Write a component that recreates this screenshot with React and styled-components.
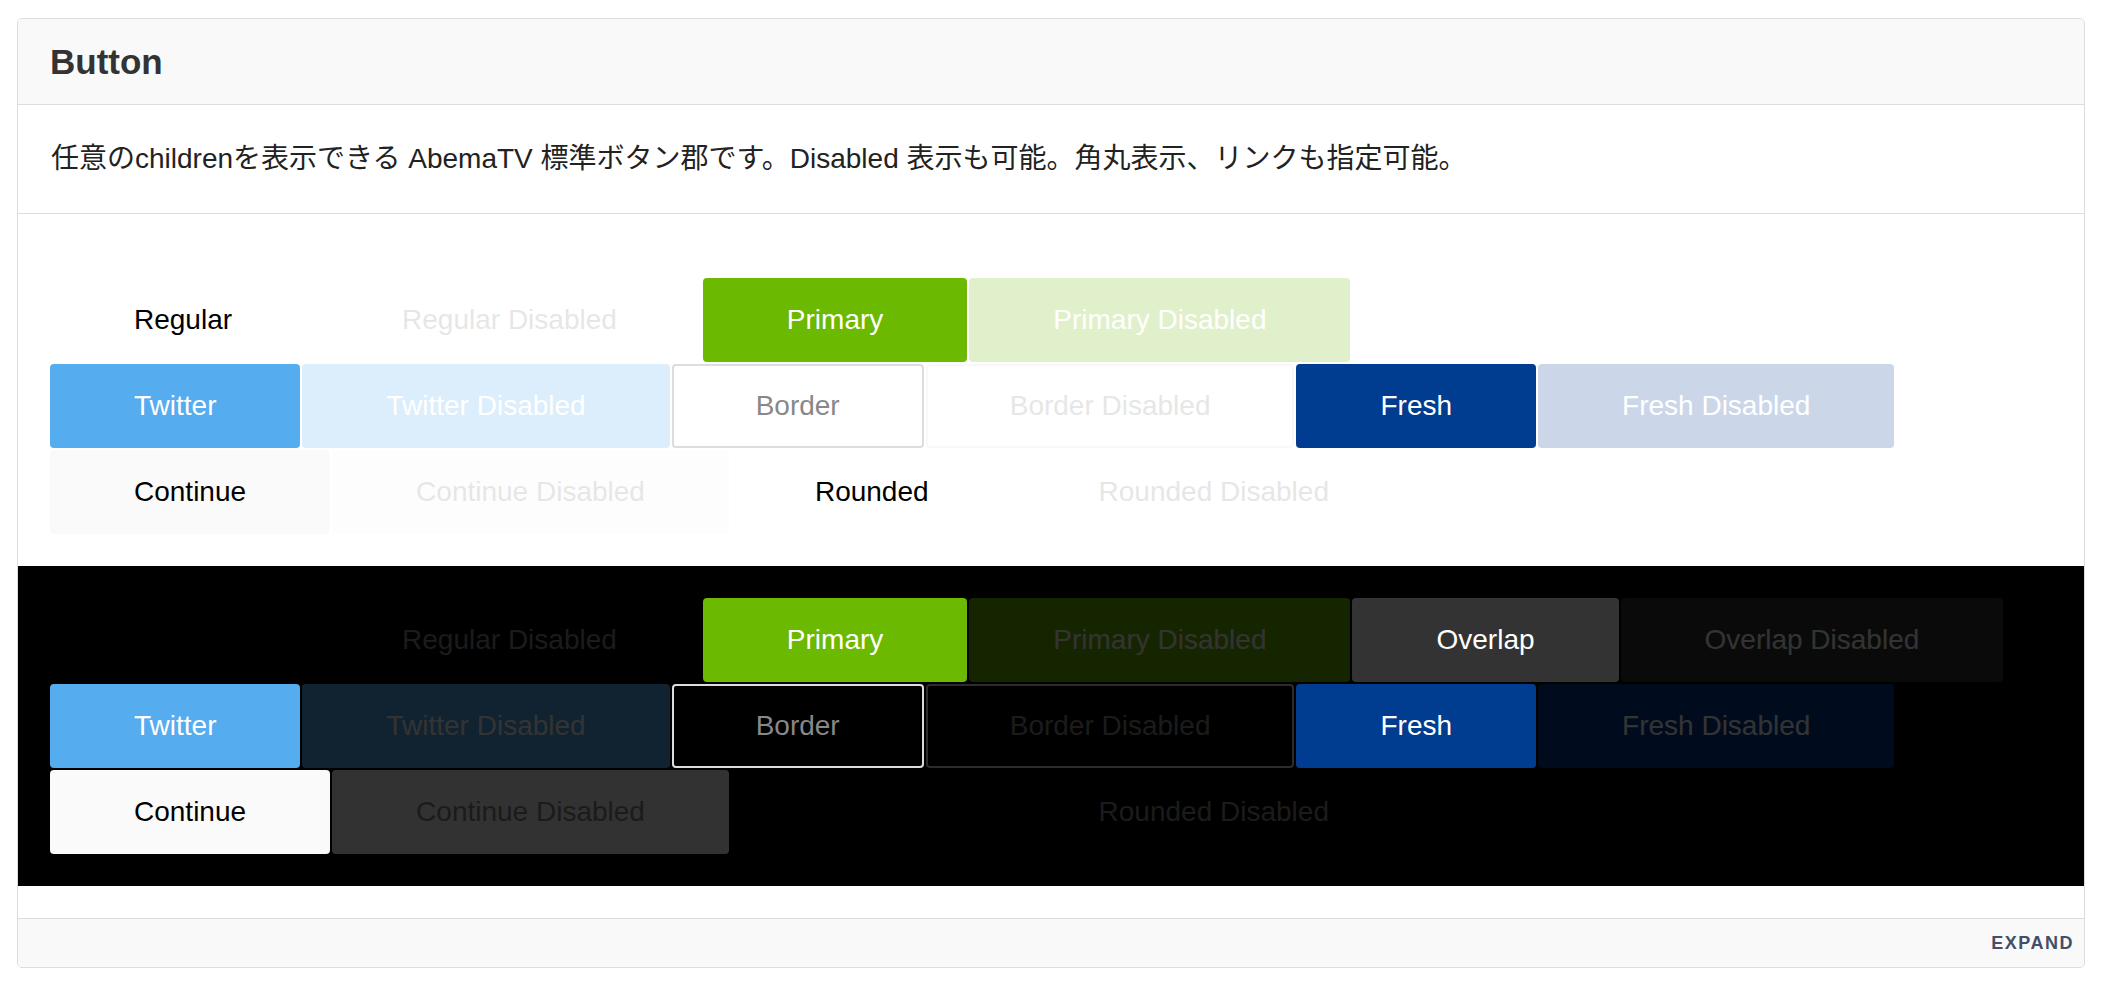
import React from 'react'
import styled, { createGlobalStyle, css } from 'styled-components'

const GlobalStyle = createGlobalStyle`
  html, body {
    margin: 0;
    padding: 0;
    background: #ffffff;
  }
  body {
    font-family: "Liberation Sans", "Noto Sans CJK JP", Arial, sans-serif;
  }
  * {
    box-sizing: border-box;
  }
`

const variants = {
  regular: css`
    background-color: transparent;
    color: #000000;
  `,
  primary: css`
    background-color: #6bb900;
    color: #ffffff;
  `,
  overlap: css`
    background-color: rgba(255, 255, 255, 0.2);
    color: #ffffff;
  `,
  twitter: css`
    background-color: #55acee;
    color: #ffffff;
  `,
  border: css`
    background-color: transparent;
    border-color: #dddddd;
    color: #888888;
  `,
  fresh: css`
    background-color: #003c8f;
    color: #ffffff;
  `,
  continue: css`
    background-color: #fafafa;
    color: #000000;
  `,
  rounded: css`
    background-color: transparent;
    border-radius: 42px;
    color: #000000;
  `
}

const rows = [
  [
    { label: 'Regular', kind: 'regular' },
    { label: 'Regular Disabled', kind: 'regular', disabled: true },
    { label: 'Primary', kind: 'primary' },
    { label: 'Primary Disabled', kind: 'primary', disabled: true },
    { label: 'Overlap', kind: 'overlap' },
    { label: 'Overlap Disabled', kind: 'overlap', disabled: true }
  ],
  [
    { label: 'Twitter', kind: 'twitter' },
    { label: 'Twitter Disabled', kind: 'twitter', disabled: true },
    { label: 'Border', kind: 'border' },
    { label: 'Border Disabled', kind: 'border', disabled: true },
    { label: 'Fresh', kind: 'fresh' },
    { label: 'Fresh Disabled', kind: 'fresh', disabled: true }
  ],
  [
    { label: 'Continue', kind: 'continue' },
    { label: 'Continue Disabled', kind: 'continue', disabled: true },
    { label: 'Rounded', kind: 'rounded' },
    { label: 'Rounded Disabled', kind: 'rounded', disabled: true }
  ]
]

export default function App () {
  return (
    <>
      <GlobalStyle />
      <Page>
        <Card>
          <Header>
            <Title>Button</Title>
          </Header>
          <Description>
            任意のchildrenを表示できる AbemaTV 標準ボタン郡です。Disabled 表示も可能。角丸表示、リンクも指定可能。
          </Description>
          <Demo>
            <Panel>
              <ButtonSet />
            </Panel>
            <Panel dark>
              <ButtonSet />
            </Panel>
          </Demo>
          <Footer>
            <ExpandLink>EXPAND</ExpandLink>
          </Footer>
        </Card>
      </Page>
    </>
  )
}

function ButtonSet () {
  return rows.map((row, i) => (
    <Row key={i}>
      {row.map(btn => (
        <Button key={btn.label} kind={btn.kind} disabled={btn.disabled}>
          {btn.label}
        </Button>
      ))}
    </Row>
  ))
}

const Page = styled.div`
  padding: 18px 17px 16px;
`
const Card = styled.section`
  border: 1px solid #dddddd;
  border-radius: 5px;
  overflow: hidden;
  background: #ffffff;
`
const Header = styled.header`
  display: flex;
  align-items: center;
  height: 86px;
  padding: 0 32px;
  background: #f9f9f9;
  border-bottom: 1px solid #dddddd;
`
const Title = styled.h2`
  margin: 0;
  font-size: 35px;
  font-weight: 700;
  color: #333333;
`
const Description = styled.p`
  margin: 0;
  padding: 32px 33px;
  font-size: 28px;
  line-height: 44px;
  color: #222222;
  border-bottom: 1px solid #dddddd;
`
const Demo = styled.div`
  padding: 32px 0 32px;
`
const Panel = styled.div`
  padding: 31px;
  background: ${p => (p.dark ? '#000000' : 'transparent')};
`
const Row = styled.div`
  display: flex;
`
const Button = styled.button`
  display: inline-flex;
  align-items: center;
  justify-content: center;
  height: 84px;
  margin: 1px;
  padding: 0 82px;
  border: 2px solid transparent;
  border-radius: 4px;
  font-family: "Liberation Sans", Arial, sans-serif;
  font-size: 28px;
  white-space: nowrap;
  cursor: pointer;
  ${p => variants[p.kind]}
  &:disabled {
    opacity: 0.2;
    cursor: default;
    ${p => (p.kind === 'regular' || p.kind === 'continue' || p.kind === 'rounded') && css`
      color: #888888;
    `}
  }
`
const Footer = styled.footer`
  display: flex;
  align-items: center;
  justify-content: flex-end;
  height: 49px;
  padding: 0 10px;
  background: #f9f9f9;
  border-top: 1px solid #dddddd;
`
const ExpandLink = styled.a`
  font-size: 18px;
  font-weight: 700;
  letter-spacing: 1.5px;
  color: #434f69;
  cursor: pointer;
`
